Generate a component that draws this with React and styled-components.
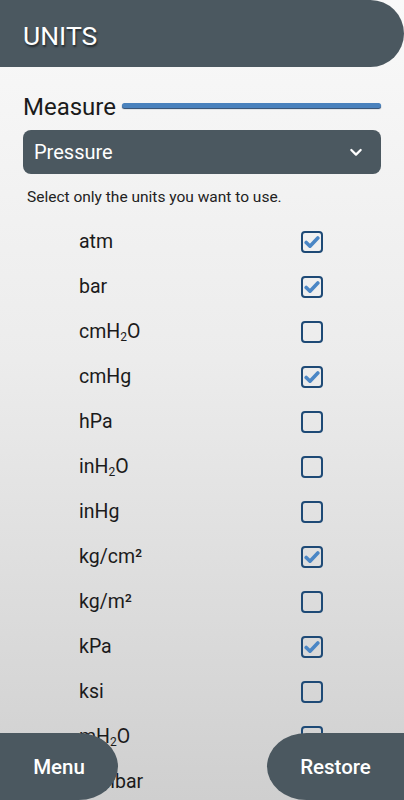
import React, { useState } from 'react';
import styled, { createGlobalStyle } from 'styled-components';

const GlobalStyle = createGlobalStyle`
  html, body {
    margin: 0;
    padding: 0;
  }
  body {
    font-family: Roboto, 'Noto Sans', sans-serif;
  }
`;

const Screen = styled.div`
  position: relative;
  width: 404px;
  height: 800px;
  overflow: hidden;
  background: linear-gradient(180deg, #f9f9f9 0%, #ececec 45%, #cfcfcf 100%);
  color: #1b1b1b;
`;

const Header = styled.header`
  height: 67px;
  display: flex;
  align-items: center;
  padding: 3px 0 0 23px;
  box-sizing: border-box;
  background: #4b5860;
  border-radius: 0 34px 34px 0;
`;

const Title = styled.h1`
  margin: 0;
  font-size: 26.5px;
  font-weight: 400;
  color: #fff;
  text-shadow: 1px 2px 2px rgba(0, 0, 0, 0.55);
`;

const Content = styled.main`
  padding: 27px 23px 0 23px;
`;

const MeasureRow = styled.div`
  display: flex;
  align-items: center;
  gap: 6px;
  height: 26px;
`;

const MeasureLabel = styled.span`
  font-size: 24px;
  line-height: 26px;
`;

const MeasureBar = styled.div`
  flex: 1;
  height: 5px;
  margin-top: -3px;
  border-radius: 3px;
  background: #4a82bd;
  box-shadow: 0 1px 1px #27456a;
`;

const Select = styled.div`
  margin-top: 10px;
  height: 44px;
  display: flex;
  align-items: center;
  justify-content: space-between;
  padding: 0 17px 0 11px;
  border-radius: 8px;
  background: #4b5860;
  color: #fff;
  font-size: 20px;
`;

const Hint = styled.p`
  margin: 13px 0 0 4px;
  font-size: 15.5px;
  line-height: 20px;
  color: #222;
`;

const UnitList = styled.ul`
  list-style: none;
  margin: 12px 0 0 0;
  padding: 0;
`;

const UnitRow = styled.li`
  height: 45px;
  display: grid;
  grid-template-columns: 1fr 22px;
  align-items: center;
  padding: 0 81px 0 79px;
  font-size: 19.5px;
  cursor: pointer;
`;

const Box = styled.span`
  width: 22px;
  height: 22px;
  box-sizing: border-box;
  border: 2.2px solid #1e4a76;
  border-radius: 4px;
  display: flex;
  align-items: center;
  justify-content: center;
`;

const BottomButton = styled.button`
  position: absolute;
  bottom: 0;
  ${({ $side }) => ($side === 'left' ? 'left: 0;' : 'right: 0;')}
  width: ${({ $width }) => $width}px;
  height: 67px;
  border: none;
  background: #4b5860;
  color: #fff;
  font-family: Roboto, sans-serif;
  font-size: 20.5px;
  font-weight: 500;
  border-radius: ${({ $side }) =>
    $side === 'left' ? '0 40px 40px 0 / 0 34px 34px 0' : '40px 0 0 40px / 34px 0 0 34px'};
  padding: 0;
`;

const Chevron = () => (
  <svg width="16" height="16" viewBox="0 0 24 24" fill="none" stroke="#fff" strokeWidth="3.4" strokeLinecap="round" strokeLinejoin="round">
    <path d="M5 9l7 7 7-7" />
  </svg>
);

const Check = () => (
  <svg width="16" height="14" viewBox="0 0 16 14">
    <path d="M2.2 7.4l3.8 3.8L13.8 3" fill="none" stroke="#4a86c5" strokeWidth="3.6" strokeLinecap="round" strokeLinejoin="round" />
  </svg>
);

const Sub = styled.sub`
  font-size: 12px;
  vertical-align: -3px;
  line-height: 0;
`;

const units = [
  { id: 'atm', label: 'atm', on: true },
  { id: 'bar', label: 'bar', on: true },
  { id: 'cmH2O', label: <>cmH<Sub>2</Sub>O</>, on: false },
  { id: 'cmHg', label: 'cmHg', on: true },
  { id: 'hPa', label: 'hPa', on: false },
  { id: 'inH2O', label: <>inH<Sub>2</Sub>O</>, on: false },
  { id: 'inHg', label: 'inHg', on: false },
  { id: 'kgcm2', label: 'kg/cm²', on: true },
  { id: 'kgm2', label: 'kg/m²', on: false },
  { id: 'kPa', label: 'kPa', on: true },
  { id: 'ksi', label: 'ksi', on: false },
  { id: 'mH2O', label: <>mH<Sub>2</Sub>O</>, on: false },
  { id: 'millibar', label: 'millibar', on: false },
  { id: 'mmH2O', label: <>mmH<Sub>2</Sub>O</>, on: false },
  { id: 'mmHg', label: 'mmHg', on: true },
];

export default function App() {
  const [checked, setChecked] = useState(() =>
    Object.fromEntries(units.map(u => [u.id, u.on]))
  );

  const toggle = id => setChecked(c => ({ ...c, [id]: !c[id] }));

  return (
    <Screen>
      <GlobalStyle />
      <Header>
        <Title>UNITS</Title>
      </Header>
      <Content>
        <MeasureRow>
          <MeasureLabel>Measure</MeasureLabel>
          <MeasureBar />
        </MeasureRow>
        <Select>
          <span>Pressure</span>
          <Chevron />
        </Select>
        <Hint>Select only the units you want to use.</Hint>
      </Content>
      <UnitList>
        {units.map(u => (
          <UnitRow key={u.id} onClick={() => toggle(u.id)}>
            <span>{u.label}</span>
            <Box>{checked[u.id] && <Check />}</Box>
          </UnitRow>
        ))}
      </UnitList>
      <BottomButton $side="left" $width={118}>Menu</BottomButton>
      <BottomButton $side="right" $width={137}>Restore</BottomButton>
    </Screen>
  );
}
